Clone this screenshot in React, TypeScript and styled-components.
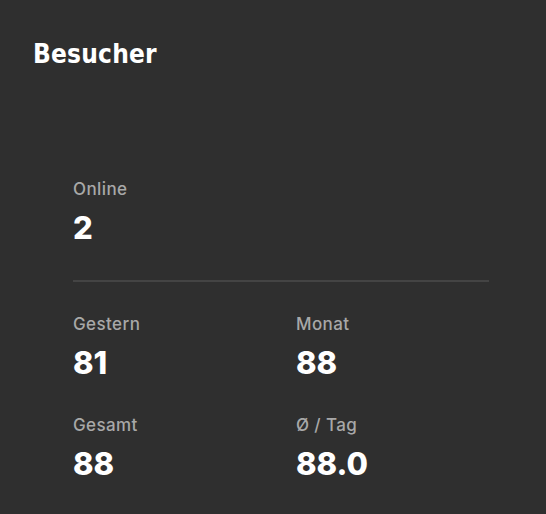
import React from 'react';
import styled, { createGlobalStyle } from 'styled-components';

const GlobalStyle = createGlobalStyle`
    html, body {
        margin: 0;
        padding: 0;
        background: #2f2f2f;
    }
`;

const Panel = styled.div`
    width: 546px;
    height: 514px;
    box-sizing: border-box;
    background: #2f2f2f;
    padding: 38px 57px 0 33px;
    font-family: Inter, 'Noto Sans', sans-serif;
`;

const Title = styled.h2`
    margin: 0;
    font-family: 'DejaVu Sans Condensed', 'DejaVu Sans', sans-serif;
    font-stretch: condensed;
    font-size: 26px;
    line-height: 32px;
    font-weight: 700;
    color: #ffffff;
    letter-spacing: 0.2px;
`;

const Stats = styled.div`
    margin: 108px 0 0 40px;
`;

const Divider = styled.hr`
    border: none;
    border-top: 2px solid #444444;
    margin: 35px 0 31px;
`;

const Grid = styled.div`
    display: grid;
    grid-template-columns: 1fr 1fr;
    column-gap: 30px;
    row-gap: 34px;
`;

const Stat = styled.div`
    display: flex;
    flex-direction: column;
    gap: 11px;
`;

const Label = styled.span`
    font-size: 17px;
    font-weight: 500;
    letter-spacing: 0.4px;
    color: #a8a8a8;
    line-height: 22px;
`;

const Value = styled.span`
    font-size: 31px;
    font-weight: 800;
    color: #ffffff;
    line-height: 34px;
`;

const StatItem: React.FC<{ label: string; value: string }> = ({ label, value }) => (
    <Stat>
        <Label>{label}</Label>
        <Value>{value}</Value>
    </Stat>
);

export default function App() {
    return (
        <>
            <GlobalStyle />
            <Panel>
                <Title>Besucher</Title>
                <Stats>
                    <StatItem label="Online" value="2" />
                    <Divider />
                    <Grid>
                        <StatItem label="Gestern" value="81" />
                        <StatItem label="Monat" value="88" />
                        <StatItem label="Gesamt" value="88" />
                        <StatItem label="Ø / Tag" value="88.0" />
                    </Grid>
                </Stats>
            </Panel>
        </>
    );
}
